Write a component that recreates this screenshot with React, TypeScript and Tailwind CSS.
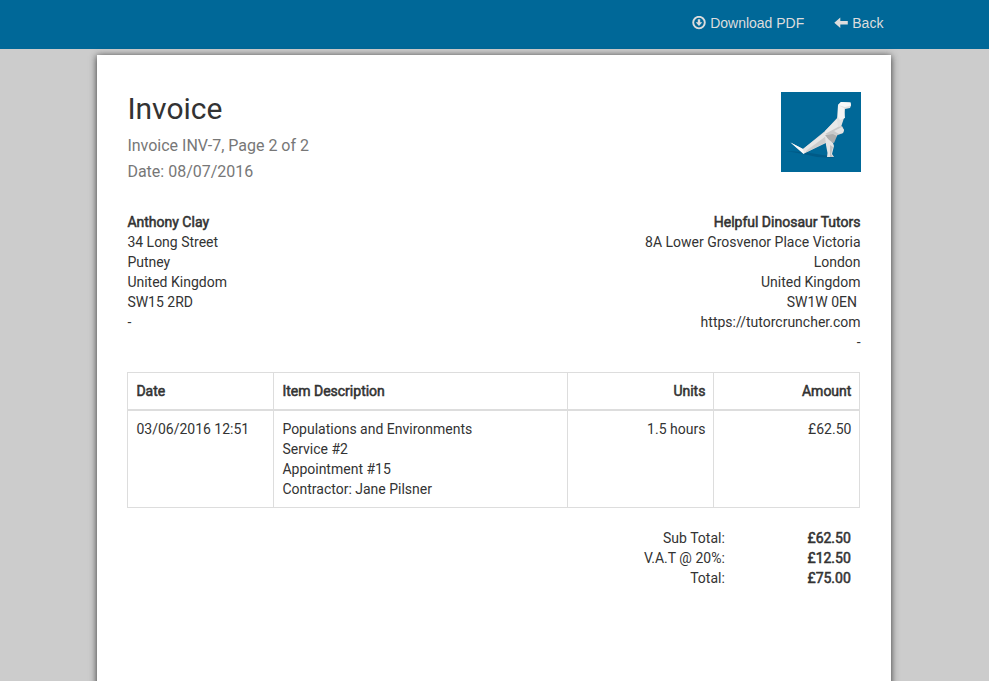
import React from 'react';

function DownloadIcon() {
  return (
    <svg width="14" height="14" viewBox="0 0 14 14" className="mr-1 shrink-0" fill="none">
      <circle cx="7" cy="6.6" r="5.8" stroke="#ddd" strokeWidth="1.9" />
      <path d="M5.8 3.3h2.4v3h2.1L7 9.9 3.7 6.3h2.1z" fill="#ddd" />
    </svg>
  );
}

function BackIcon() {
  return (
    <svg width="14" height="14" viewBox="0 0 14 14" className="mr-1 shrink-0">
      <path d="M0.3 6.8l6-5.2v3.5h7.5v3.4H6.3V12z" fill="#ddd" />
    </svg>
  );
}

function Dinosaur() {
  return (
    <svg width="80" height="80" viewBox="0 0 80 80" className="bg-[#006898]">
      <path d="M5 59l18 1 25 4 6 2-18-1-14-3z" fill="#005a87" />
      <path d="M9.5 50.5L22 57l22-18 13-14 3 10-4 9-11 7-22 10.5z" fill="#d6d6d6" />
      <path d="M9.5 50.5L22 57l4 2-3.5 3z" fill="#fafafa" />
      <path d="M22 57l22-17v5L27 57l-4 4z" fill="#e6e6e6" />
      <path d="M23 61l21-16 1 5-19 10z" fill="#cdcdcd" />
      <path d="M57 13l3-3 9.5 0.5.5 3-1 2.5-5 1-1 9-3 9-4 1-8 1 8-10z" fill="#e2e2e2" />
      <path d="M57 13l6 3 1 10-5 2-2-3z" fill="#f4f4f4" />
      <path d="M57 13l3-3 9.5 0.5.5 3-6 1.5z" fill="#f8f8f8" />
      <path d="M44 39l12-12 1 8-4 4-9 4z" fill="#e9e9e9" />
      <path d="M44 42l13-7 4-1 2 4-1 3-5 2-6-1z" fill="#c9c9c9" />
      <path d="M53 39l8-4 2 3-1 3-4 1z" fill="#e3e3e3" />
      <path d="M44 43l8-1 4 2-3 7-4-1z" fill="#adadad" />
      <path d="M44 43l3 4 5 4 1 3-2 8 2 3h-7l.5-4L45 53z" fill="#e4e4e4" />
      <path d="M49 53l3 2-2 7 2 3h-3z" fill="#c2c2c2" />
    </svg>
  );
}

const faux = '[-webkit-text-stroke:0.55px_#333] font-normal';
const cell = 'border-r border-[#ddd] py-2 pl-[8.4px] pr-[7.6px]';

export default function App() {
  return (
    <div className="h-[681px] overflow-hidden bg-[#ccc] font-['Roboto',sans-serif] text-[14px] leading-5 text-[#333]">
      <nav className="flex h-[49px] items-start justify-end bg-[#006898] pt-[13px] pr-[105.6px] font-['Liberation_Sans',Arial,sans-serif] text-[#ddd]">
        <a className="mr-[30px] flex h-5 items-center"><DownloadIcon />Download PDF</a>
        <a className="flex h-5 items-center"><BackIcon />Back</a>
      </nav>
      <main className="mt-[6px] ml-[97px] h-[1123px] w-[794px] bg-white pt-[37px] pr-[30.5px] pl-[30.4px] shadow-[0_1px_7px_#333]">
        <header className="flex h-[120px] justify-between">
          <div>
            <h1 className="text-[30px] leading-[33px]">Invoice</h1>
            <div className="mt-2 text-[16px] leading-[26px] text-[#777]">
              <p>Invoice INV-7, Page 2 of 2</p>
              <p>Date: 08/07/2016</p>
            </div>
          </div>
          <Dinosaur />
        </header>
        <section className="flex h-40 justify-between">
          <address className="not-italic">
            <p className={faux}>Anthony Clay</p>
            <p>34 Long Street</p>
            <p>Putney</p>
            <p>United Kingdom</p>
            <p>SW15 2RD</p>
            <p>-</p>
          </address>
          <address className="text-right not-italic">
            <p className={faux}>Helpful Dinosaur Tutors</p>
            <p>8A Lower Grosvenor Place Victoria</p>
            <p>London</p>
            <p>United Kingdom</p>
            <p>SW1W 0EN&nbsp;</p>
            <p>https://tutorcruncher.com</p>
            <p>-</p>
          </address>
        </section>
        <table className="-ml-[0.4px] w-[733px] table-fixed border-separate border-spacing-0 border-t border-l border-[#ddd]">
          <colgroup>
            <col className="w-[146px]" />
            <col className="w-[294px]" />
            <col className="w-[146px]" />
            <col className="w-[146px]" />
          </colgroup>
          <thead>
            <tr className={faux}>
              <th className={`${cell} border-b-2 text-left font-normal`}>Date</th>
              <th className={`${cell} border-b-2 text-left font-normal`}>Item Description</th>
              <th className={`${cell} border-b-2 text-right font-normal`}>Units</th>
              <th className={`${cell} border-b-2 text-right font-normal`}>Amount</th>
            </tr>
          </thead>
          <tbody>
            <tr className="align-top">
              <td className={`${cell} border-b`}>03/06/2016 12:51</td>
              <td className={`${cell} border-b`}>
                <p>Populations and Environments</p>
                <p>Service #2</p>
                <p>Appointment #15</p>
                <p>Contractor: Jane Pilsner</p>
              </td>
              <td className={`${cell} border-b text-right`}>1.5 hours</td>
              <td className={`${cell} border-b text-right`}>£62.50</td>
            </tr>
          </tbody>
        </table>
        <dl className="mt-5 -ml-[0.6px] grid grid-cols-[598px_126px] text-right">
          <dt>Sub Total:</dt>
          <dd className={faux}>£62.50</dd>
          <dt>V.A.T @ 20%:</dt>
          <dd className={faux}>£12.50</dd>
          <dt>Total:</dt>
          <dd className={faux}>£75.00</dd>
        </dl>
      </main>
    </div>
  );
}
